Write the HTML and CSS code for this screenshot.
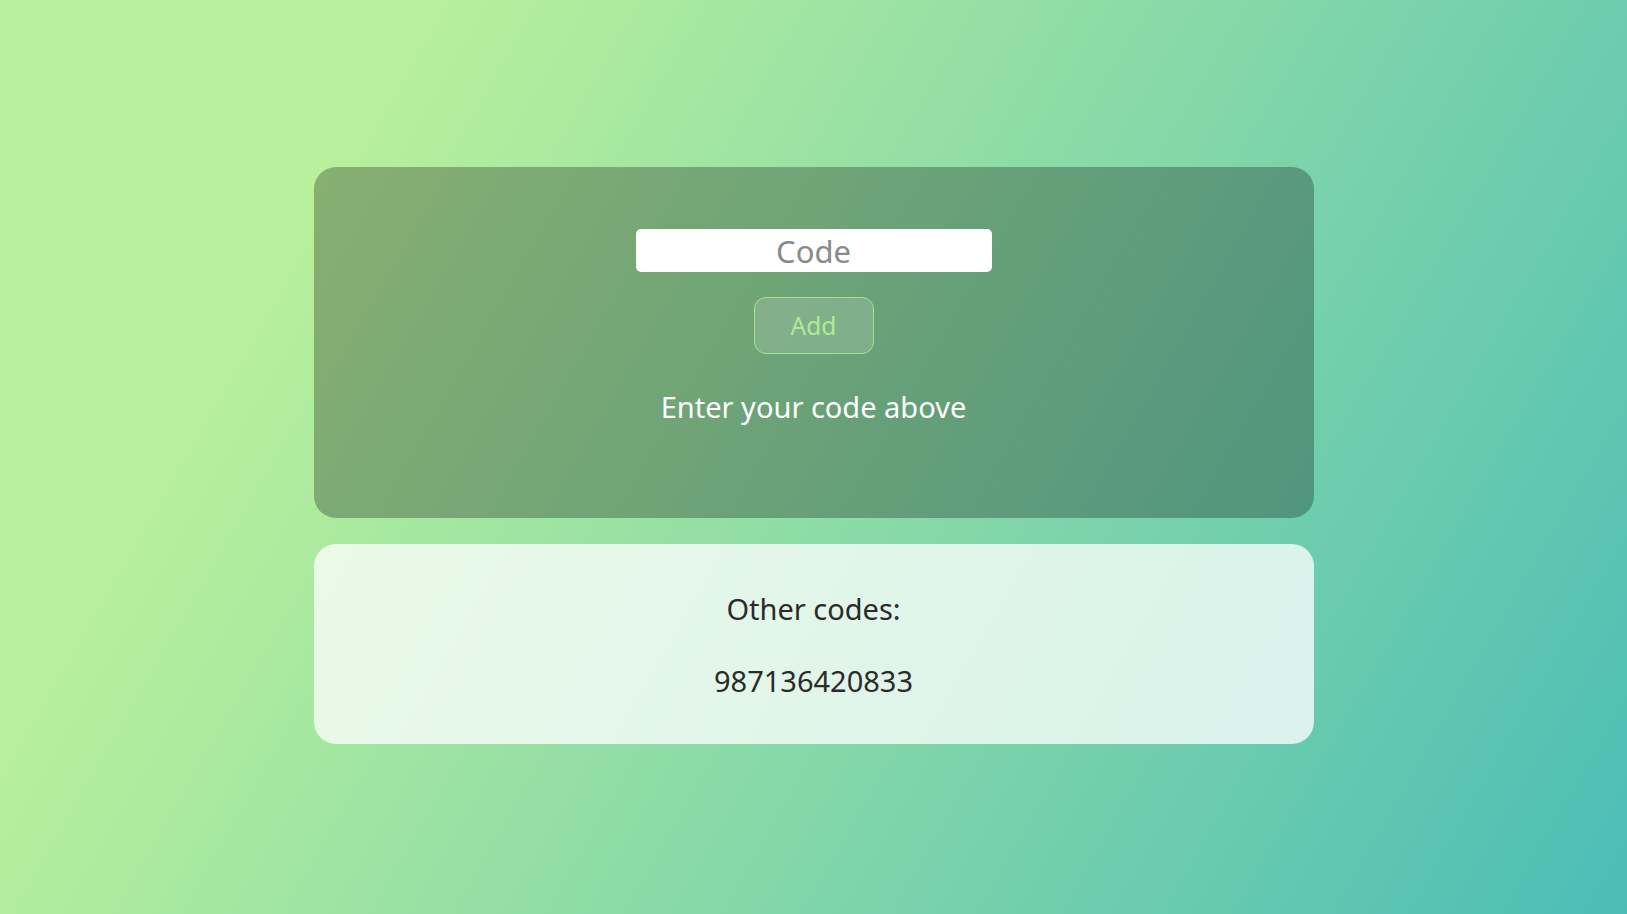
FILE: index.html
```html
<!DOCTYPE html>
<html lang="en">
<head>
<meta charset="utf-8">
<title>Codes</title>
<link rel="stylesheet" href="styles.css">
</head>
<body>
<main class="page">
  <section class="card card-entry">
    <input class="code-input" type="text" placeholder="Code">
    <button class="add-btn" type="button">Add</button>
    <p class="hint">Enter your code above</p>
  </section>
  <section class="card card-list">
    <p class="list-title">Other codes:</p>
    <p class="list-item">987136420833</p>
  </section>
</main>
</body>
</html>
```
FILE: styles.css
```css
* { box-sizing: border-box; }
html, body { margin: 0; padding: 0; }
body {
  min-height: 100vh;
  font-family: "Noto Sans", "Open Sans", sans-serif;
  background: linear-gradient(120deg, #b8f09c 20%, #4cbdb6 100%);
}
.page {
  min-height: 100vh;
  display: flex;
  flex-direction: column;
  align-items: center;
  padding-top: 167px;
  gap: 26px;
}
.card {
  width: 1000px;
  border-radius: 22px;
  display: flex;
  flex-direction: column;
  align-items: center;
}
.card-entry {
  background: rgba(0, 0, 0, 0.27);
  height: 351px;
  padding-top: 62px;
}
.code-input {
  width: 356px;
  height: 43px;
  border: none;
  border-radius: 5px;
  background: #fff;
  text-align: center;
  font-family: inherit;
  font-size: 31px;
  color: #333;
  outline: none;
}
.code-input::placeholder { color: #8a8a8a; }
.add-btn {
  margin-top: 25px;
  width: 120px;
  height: 57px;
  border: 1px solid #a6e58a;
  border-radius: 12px;
  background: rgba(255, 255, 255, 0.14);
  color: #aeec92;
  font-family: inherit;
  font-size: 24.5px;
}
.hint {
  margin: 33px 0 0;
  color: #fff;
  font-size: 29px;
}
.card-list {
  background: rgba(255, 255, 255, 0.75);
  height: 200px;
  padding-top: 45px;
  color: #2b2b2b;
}
.list-title, .list-item {
  margin: 0;
  font-size: 29px;
}
.list-item { margin-top: 33px; }
```
